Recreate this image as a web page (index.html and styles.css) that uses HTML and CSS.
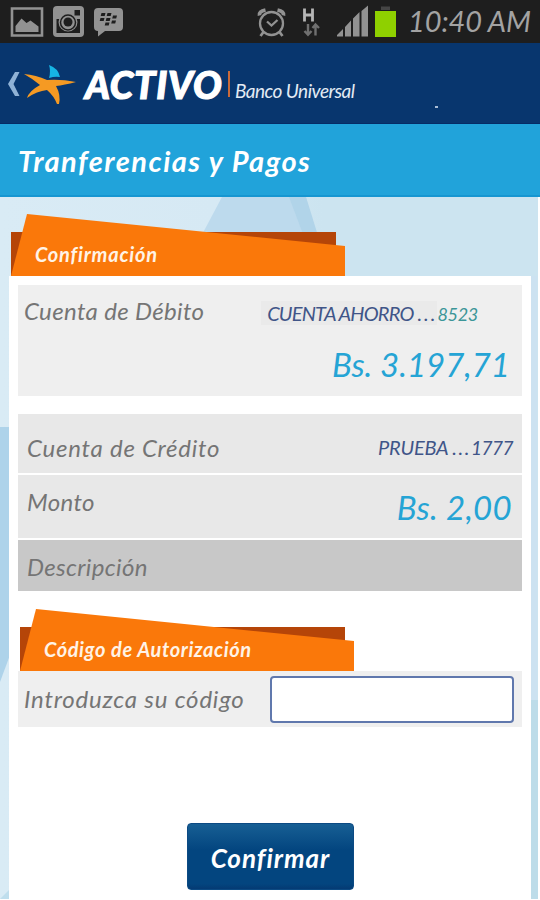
FILE: index.html
```
<!DOCTYPE html>
<html lang="es">
<head>
    <meta charset="UTF-8">
    <meta name="viewport" content="width=device-width, initial-scale=1.0">
    <title>Activo Banco Universal</title>
    <link rel="stylesheet" href="styles.css">
</head>
<body>
    <div class="status-bar">
        <svg class="status-left" width="130" height="43" viewBox="0 0 130 43">
            <path d="M12 8.500h30v27H12z" fill="none" stroke="#929292" stroke-width="2.600"/>
            <path d="M15.500 32V26l6-7.500 5 4.500 4-2.500 8 6V32z" fill="#929292"/>
            <rect x="53" y="6" width="31" height="31" rx="4" fill="#929292"/>
            <path d="M56.500 19H80v14H56.500z" fill="#1e1e1e"/>
            <circle cx="68" cy="22" r="9.500" fill="#929292"/>
            <circle cx="68" cy="22.500" r="7.500" fill="none" stroke="#1e1e1e" stroke-width="1.500"/>
            <circle cx="68" cy="22" r="4.500" fill="#1e1e1e"/>
            <rect x="74.500" y="10" width="5.500" height="5.500" fill="#1e1e1e"/>
            <path d="M98 8h21q4 0 4 4v15q0 4-4 4h-14l-7 5.500V31q-4 0-4-4V12q0-4 4-4z" fill="#929292"/>
            <g fill="#1e1e1e">
                <path d="M101.500 13h4l-.8 3h-4zM107.500 13h4l-.8 3h-4zM100.500 18h4l-.8 3h-4zM106.500 18h4l-.8 3h-4zM113 15.500h4l-.8 3h-4zM112 20.500h4l-.8 3h-4zM105.500 22.500h4l-.8 3h-4z"/>
            </g>
        </svg>
        <svg class="status-right" width="150" height="43" viewBox="250 0 150 43">
            <g fill="none" stroke="#929292" stroke-width="2.300">
                <circle cx="271.500" cy="23.500" r="11.500"/>
                <path d="M267 21.500l4.500 4 6-5.500"/>
                <path d="M259.500 15.500q-1-4 6-5.500M283.500 15.500q1-4-6-5.500" stroke-width="3.800"/>
                <path d="M263.500 32l-3 4M279.500 32l3 4" stroke-width="2.800"/>
            </g>
            <path d="M304.500 8.500v13M312.500 8.500v13M304.500 15h8" stroke="#b5b5b5" stroke-width="2.800"/>
            <g fill="none" stroke="#707070" stroke-width="2.400">
                <path d="M308 24v10M304.500 31l3.500 3.800 3.500-3.800M315.500 35.500V25M312.500 28l3-3.500 3.500 3.500"/>
            </g>
            <path d="M337 36.500v-1.500l6-6v7.500zM345 36.500V27l6-6.500v16zM353 36.500V18.500l6.500-6.500v24.500zM361.500 36.500V11l6.500-5.500v31z" fill="#929292"/>
            <path d="M381 6.500h9V10h-9z" fill="#454545"/>
            <path d="M375 11h21v26h-21z" fill="#8fd000"/>
        </svg>
        <span class="clock">10:40 AM</span>
    </div>

    <header class="header">
        <svg class="back" width="14" height="26" viewBox="0 0 14 26">
            <path d="M8 1h4.500L6.500 13l6 12H8L1 13z" fill="#8fb2d6"/>
        </svg>
        <svg class="star" width="54" height="42" viewBox="0 0 54 42">
            <path d="M1 10q12 1 23 6 14-1 29 2-12 3-20 4 5 9 3 18l-2 0q-3-8-10-14-10 1-20 8 2-7 13-13-7-6-16-11z" fill="#f59a23"/>
            <path d="M26 1q9 3 11 12-5-1-11 1 2-7 0-13z" fill="#16b5e4"/>
        </svg>
        <span class="brand">ACTIVO</span>
        <span class="brand-sub">Banco Universal</span>
        <span class="dot"></span>
    </header>

    <h1 class="page-title"><span>Tranferencias y Pagos</span></h1>

    <main class="content">
        <svg class="backdrop" width="540" height="703" viewBox="0 197 540 703">
            <defs>
                <linearGradient id="sky" x1="0" x2="1">
                    <stop offset="0" stop-color="#d9ebf5"/>
                    <stop offset="0.400" stop-color="#d6e9f4"/>
                    <stop offset="0.600" stop-color="#cce4f0"/>
                </linearGradient>
            </defs>
            <path d="M0 197h538v702H0z" fill="url(#sky)"/>
            <path d="M222 197h84l18 79H180z" fill="#bddaed"/>
            <path d="M289 197h17l14 45h-14z" fill="#b1d4e9"/>
            <path d="M531 276h6v424h-6z" fill="#cce2f1"/>
            <path d="M531 700h7v199h-7z" fill="#bddce9"/>
            <path d="M0 427h10v228L0 682z" fill="#aed3ea"/>
            <path d="M10 889v10H0z" fill="#bfdeed"/>
        </svg>

        <div class="ribbon">
            <svg width="335" height="62" viewBox="0 0 335 62">
                <path d="M0 18h325v44H0z" fill="#b54508"/>
                <path d="M16 0l318 32v30H0z" fill="#fa780a"/>
            </svg>
            <h2 class="ribbon-text confirm">Confirmación</h2>
        </div>

        <div class="panel">
            <section class="card debit">
                <div class="line">
                    <span class="label debit-label">Cuenta de Débito</span>
                    <span class="account"><span class="account-name">CUENTA AHORRO <span class="dots">...</span></span><span class="digits">8523</span></span>
                </div>
                <div class="amount balance">Bs. 3.197,71</div>
            </section>

            <section class="card row credit">
                <span class="label credit-label">Cuenta de Crédito</span>
                <span class="target">PRUEBA <span class="dots">...</span><span class="target-digits">1777</span></span>
            </section>
            <section class="card row monto">
                <span class="label monto-label">Monto</span>
                <span class="amount total">Bs. 2,00</span>
            </section>
            <section class="card row description">
                <span class="label description-label">Descripción</span>
            </section>

            <div class="ribbon ribbon-code">
                <svg width="335" height="62" viewBox="0 0 335 62">
                    <path d="M0 18h325v44H0z" fill="#b54508"/>
                    <path d="M16 0l318 32v30H0z" fill="#fa780a"/>
                </svg>
                <h2 class="ribbon-text code">Código de Autorización</h2>
            </div>
            <section class="card row code-row">
                <label class="label code-label" for="code">Introduzca su código</label>
                <input class="code-input" type="text" id="code">
            </section>

            <button class="confirm-button" type="button">Confirmar</button>
        </div>
    </main>
</body>
</html>
```
FILE: styles.css
```
* {
    box-sizing: border-box;
}
body {
    width: 540px;
    height: 900px;
    margin: 0;
    overflow: hidden;
    background: white;
    font-family: Lato, "Open Sans", sans-serif;
    font-style: italic;
    font-variant-ligatures: none;
}
h1, h2 {
    margin: 0;
}
span, label, h2 {
    white-space: nowrap;
}
.status-bar {
    height: 43px;
    background: #1e1e1e;
    display: flex;
}
.status-right {
    margin-left: 120px;
}
.clock {
    margin-left: 8px;
    color: #a3a3a3;
    font-size: 29px;
    line-height: 42px;
    letter-spacing: -0.1px;
}
.header {
    height: 81px;
    background: #08366e;
    border-bottom: 1px solid #052c66;
    display: flex;
    align-items: flex-start;
}
.back {
    margin: 28px 0 0 7px;
}
.star {
    margin: 21px 0 0 2px;
}
.brand {
    width: 142px;
    margin: 21px 0 0 8px;
    font-size: 38px;
    font-weight: 900;
    line-height: 40px;
    letter-spacing: 0.8px;
    color: white;
    -webkit-text-stroke: 1.2px white;
}
.brand-sub {
    margin: 28px 0 0 1px;
    padding-left: 5px;
    border-left: 2px solid #c96a3a;
    height: 26px;
    font-size: 19px;
    line-height: 39px;
    letter-spacing: -0.5px;
    color: #e3ebf4;
}
.dot {
    width: 3px;
    height: 2px;
    margin: 63px 0 0 80px;
    background: #a9bdd5;
}
.page-title {
    height: 73px;
    padding-left: 18px;
    background: #21a3da;
    border-bottom: 2px solid #1696d1;
    color: white;
    font-size: 29px;
    font-weight: 700;
    line-height: 74px;
    letter-spacing: 1.5px;
}
.content {
    position: relative;
    height: 703px;
    padding: 17px 9px 0;
}
.backdrop {
    position: absolute;
    left: 0;
    top: 0;
}
.ribbon {
    position: relative;
    width: 335px;
    height: 62px;
    margin-left: 2px;
}
.ribbon svg {
    display: block;
}
.ribbon-text {
    position: absolute;
    left: 24px;
    top: 28px;
    color: #fff3e6;
    font-size: 20px;
    font-weight: 700;
    line-height: 24px;
    letter-spacing: 0.6px;
}
.confirm {
    letter-spacing: 0.8px;
}
.panel {
    position: relative;
    height: 624px;
    padding: 9px 9px 0;
    background: white;
}
.panel .ribbon {
    margin: 18px 0 0 2px;
}
.card {
    background: #efefef;
}
.label {
    color: #757575;
    font-size: 24px;
    line-height: 30px;
    letter-spacing: 0.35px;
}
.debit {
    height: 111px;
    padding: 11px 12px 0 6px;
}
.line {
    display: flex;
    height: 48px;
}
.account {
    margin: 5px 0 0 auto;
    padding-right: 32px;
    height: 24px;
    font-size: 20px;
    line-height: 25px;
}
.account-name {
    display: inline-block;
    height: 24px;
    padding-left: 6px;
    background: #eaeaea;
    color: #405588;
    letter-spacing: -0.8px;
}
.dots {
    letter-spacing: 2px;
}
.digits {
    color: #3c9698;
    font-size: 18px;
    letter-spacing: -0.3px;
}
.amount {
    color: #25a4d5;
    font-size: 33px;
    line-height: 40px;
    text-align: right;
}
.row {
    display: flex;
    justify-content: space-between;
    padding: 0 9px;
    background: #e8e8e8;
}
.credit {
    height: 59px;
    margin-top: 18px;
    padding-top: 19px;
}
.credit-label {
    letter-spacing: 0.75px;
}
.target {
    color: #405588;
    font-size: 20px;
    line-height: 28px;
    letter-spacing: -0.2px;
}
.target .dots {
    letter-spacing: 1.5px;
}
.target-digits {
    font-size: 19px;
    letter-spacing: -0.5px;
}
.monto {
    height: 63px;
    margin-top: 2px;
    padding-top: 12px;
}
.total {
    padding-right: 1px;
    letter-spacing: 0.3px;
}
.description {
    height: 51px;
    margin-top: 2px;
    padding-top: 12px;
    background: #c8c8c8;
}
.code-row {
    height: 56px;
    padding: 5px 8px 0 6px;
    background: #efefef;
}
.code-label {
    padding-top: 8px;
    letter-spacing: 0.8px;
}
.code-input {
    width: 244px;
    height: 47px;
    border: 2px solid #6078ad;
    border-radius: 4px;
    background: white;
}
.confirm-button {
    display: block;
    width: 167px;
    height: 67px;
    margin: 96px 0 0 169px;
    padding: 2px 0 0;
    border: 1px solid #0c4a83;
    border-radius: 4px;
    background: linear-gradient(#175f94, #03457f 40%, #03457f 92%, #043a73);
    color: white;
    font: italic 700 26px Lato, sans-serif;
    letter-spacing: 1px;
}
```
